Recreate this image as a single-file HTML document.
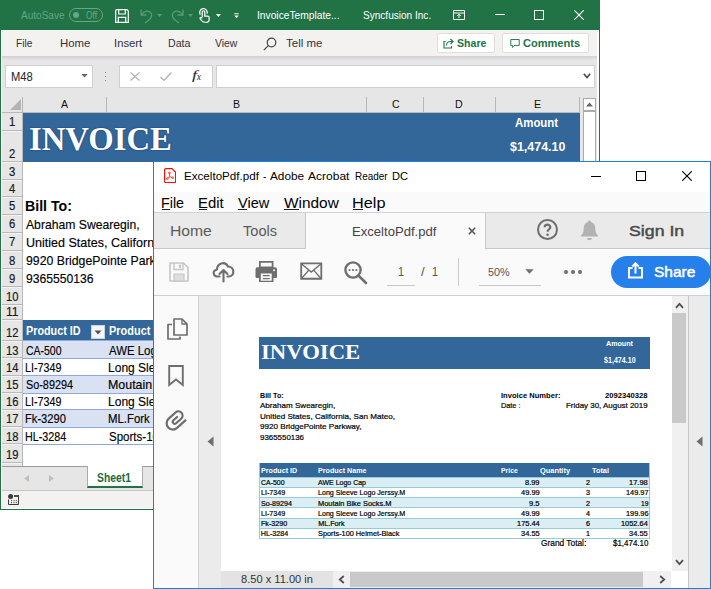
<!DOCTYPE html>
<html lang="en"><head><meta charset="utf-8"><title>Excel to PDF</title>
<style>
html,body{margin:0;padding:0;background:#fff;}
body{width:711px;height:589px;overflow:hidden;position:relative;font-family:"Liberation Sans",sans-serif;}
div,span,svg{position:absolute;box-sizing:border-box;}
.t{white-space:nowrap;line-height:1.2;transform-origin:0 0;}
#xl{left:0;top:0;width:600px;height:510px;background:#e6e6e6;overflow:hidden;}
#ac{left:153px;top:161px;width:558px;height:428px;background:#fff;border:1px solid #1883d7;overflow:hidden;}
#acin{left:-154px;top:-162px;width:711px;height:589px;}
.rh{left:2px;width:20px;height:1px;background:#b9b9b9;box-shadow:0 1px 0 #f3f3f3;}
.band{left:23px;width:557px;background:#d9e1f2;border-top:1px solid #8ea9db;border-bottom:1px solid #8ea9db;}
</style></head><body>

<div id="xl">
  <!-- title bar -->
  <div style="left:0;top:0;width:600px;height:30px;background:#217346;"></div>
  <!-- ribbon tabs -->
  <div style="left:0;top:30px;width:600px;height:26px;background:#f3f2f1;"></div>
  <div style="left:0;top:56px;width:600px;height:4px;background:linear-gradient(#d2d0ce,#e6e6e6);"></div>
  <!-- share / comments buttons -->
  <div style="left:437px;top:33px;width:58px;height:20px;background:#fff;border:1px solid #e1dfdd;border-radius:2px;"></div>
  <div style="left:502px;top:33px;width:87px;height:20px;background:#fff;border:1px solid #e1dfdd;border-radius:2px;"></div>
  <!-- formula bar -->
  <div style="left:5px;top:65px;width:88px;height:23px;background:#fff;border:1px solid #cfcfcf;"></div>
  <div style="left:119px;top:65px;width:94px;height:23px;background:#fff;border:1px solid #cfcfcf;"></div>
  <div style="left:216px;top:65px;width:379px;height:23px;background:#fff;border:1px solid #cfcfcf;"></div>
  <!-- column header -->
  <div style="left:2px;top:112px;width:578px;height:1px;background:#b8b8b8;"></div>
  <div style="left:22px;top:97px;width:1px;height:16px;background:#b8b8b8;"></div>
  <div style="left:106px;top:97px;width:1px;height:16px;background:#b8b8b8;"></div>
  <div style="left:366px;top:97px;width:1px;height:16px;background:#b8b8b8;"></div>
  <div style="left:423px;top:97px;width:1px;height:16px;background:#b8b8b8;"></div>
  <div style="left:495px;top:97px;width:1px;height:16px;background:#b8b8b8;"></div>
  <div style="left:579px;top:97px;width:1px;height:16px;background:#b8b8b8;"></div>
  <svg style="left:9px;top:98px;" width="13" height="13" viewBox="0 0 13 13"><path d="M12 1 V12 H1 Z" fill="#b4b4b4"/></svg>
  <!-- grid -->
  <div style="left:23px;top:113px;width:557px;height:353px;background:#fff;"></div>
  <div style="left:22px;top:113px;width:1px;height:353px;background:#b8b8b8;"></div>
  <div style="left:23px;top:113px;width:557px;height:49px;background:#336699;"></div>
  <!-- table -->
  <div style="left:23px;top:320px;width:557px;height:21px;background:#336699;"></div>
  <div style="left:91px;top:325px;width:14px;height:14px;background:#f4f6fa;border:1px solid #c9d3e3;"></div>
  <svg style="left:94px;top:330px;" width="8" height="5" viewBox="0 0 8 5"><path d="M0.5 0.5 H7.5 L4 4.5 Z" fill="#555"/></svg>
  <div class="band" style="top:340px;height:19px;"></div>
  <div class="band" style="top:375px;height:19px;"></div>
  <div class="band" style="top:409px;height:19px;"></div>
  <div style="left:23px;top:444px;width:557px;height:1px;background:#8ea9db;"></div>
  <!-- row header lines -->
    <div class="rh" style="top:130px;"></div>
  <div class="rh" style="top:161px;"></div>
  <div class="rh" style="top:179px;"></div>
  <div class="rh" style="top:196px;"></div>
  <div class="rh" style="top:214px;"></div>
  <div class="rh" style="top:232px;"></div>
  <div class="rh" style="top:250px;"></div>
  <div class="rh" style="top:268px;"></div>
  <div class="rh" style="top:286px;"></div>
  <div class="rh" style="top:304px;"></div>
  <div class="rh" style="top:319px;"></div>
  <div class="rh" style="top:340px;"></div>
  <div class="rh" style="top:357px;"></div>
  <div class="rh" style="top:375px;"></div>
  <div class="rh" style="top:392px;"></div>
  <div class="rh" style="top:409px;"></div>
  <div class="rh" style="top:426px;"></div>
  <div class="rh" style="top:443px;"></div>
  <div class="rh" style="top:462px;"></div>
  <!-- v scrollbar -->
  <div style="left:583px;top:98px;width:13px;height:13px;background:#fff;border:1px solid #ababab;"></div>
  <svg style="left:586px;top:102px;" width="7" height="5" viewBox="0 0 7 5"><path d="M0 4.5 L3.5 0.5 L7 4.5 Z" fill="#666"/></svg>
  <div style="left:583px;top:111px;width:13px;height:355px;background:#fff;border:1px solid #ababab;"></div>
  <!-- sheet tabs -->
  <div style="left:2px;top:466px;width:596px;height:24px;background:#e6e6e6;border-top:1px solid #9a9a9a;"></div>
  <div style="left:87px;top:466px;width:56px;height:22px;background:#fff;border-left:1px solid #ababab;border-right:1px solid #ababab;border-bottom:2px solid #217346;"></div>
  <svg style="left:23.5px;top:474.5px;" width="5" height="7" viewBox="0 0 5 7"><path d="M5 0 V7 L0.3 3.5 Z" fill="#bdbdbd"/></svg>
  <svg style="left:48.5px;top:474.5px;" width="5" height="7" viewBox="0 0 5 7"><path d="M0 0 V7 L4.7 3.5 Z" fill="#bdbdbd"/></svg>
  <!-- status bar -->
  <div style="left:2px;top:490px;width:596px;height:18px;background:#f3f2f1;border-top:1px solid #c8c6c4;"></div>
  <svg style="left:8px;top:494px;" width="11" height="11" viewBox="0 0 11 11"><circle cx="2.6" cy="2.6" r="2.5" fill="#3b3b3b"/><path d="M6 2 H11" stroke="#3b3b3b" stroke-width="1.8"/><path d="M0.5 5.5 V10.5 H10.5 V3" fill="none" stroke="#3b3b3b"/><path d="M3.5 6 V10 M6 6 V10 M8.3 6 V10" stroke="#3b3b3b" stroke-width=".9" stroke-dasharray="1.2 .8"/></svg>
  <!-- title icons -->
  <div style="left:69px;top:8px;width:34px;height:14px;border:1px solid #66a685;border-radius:7px;"></div>
  <div style="left:73px;top:12px;width:6px;height:6px;border-radius:3px;background:#66a685;"></div>
  <svg style="left:115px;top:9px;" width="14" height="14" viewBox="0 0 14 14" fill="none" stroke="#fff" stroke-width="1.2"><path d="M1.5 0.7 H12 L13.3 2 V13.3 H0.7 V1.5 Z"/><path d="M3.7 0.7 V5 H10.3 V0.7"/><path d="M3.3 13.3 V8.3 H10.7 V13.3"/></svg>
  <svg style="left:140px;top:8px;" width="14" height="16" viewBox="0 0 14 16" fill="none" stroke="#599b78" stroke-width="1.3"><path d="M1 1.5 V7 H6.5"/><path d="M1.5 6.5 C4 2.5 9 2 11 5 C13 8.5 10 12 5 15"/></svg>
  <svg style="left:157px;top:14px;" width="5" height="3" viewBox="0 0 5 3"><path d="M0 0 H5 L2.5 3 Z" fill="#599b78"/></svg>
  <svg style="left:170px;top:8px;" width="14" height="16" viewBox="0 0 14 16" fill="none" stroke="#599b78" stroke-width="1.3"><path d="M13 1.5 V7 H7.5"/><path d="M12.5 6.5 C10 2.5 5 2 3 5 C1 8.5 4 12 9 15"/></svg>
  <svg style="left:187.5px;top:14px;" width="5" height="3" viewBox="0 0 5 3"><path d="M0 0 H5 L2.5 3 Z" fill="#599b78"/></svg>
  <svg style="left:197.5px;top:8.3px;" width="13" height="15.5" viewBox="0 0 14 16" fill="none" stroke="#fff" stroke-width="1.3"><path d="M4.5 9.5 V4 A1.4 1.4 0 0 1 7.3 4 V8.3 H10.3 A1.7 1.7 0 0 1 12 10 V12 A3 3 0 0 1 9 15 H7 C5 15 4 13.5 2.5 11.5 C1.5 10 3 9.2 4.5 10.8"/><path d="M2.6 6.7 A4 4 0 1 1 9.6 5.8"/></svg>
  <svg style="left:215.5px;top:14px;" width="5" height="3" viewBox="0 0 5 3"><path d="M0 0 H5 L2.5 3 Z" fill="#fff"/></svg>
  <svg style="left:233.8px;top:12.6px;" width="5" height="5.5" viewBox="0 0 6 6"><path d="M0.3 0.6 H5.7" stroke="#fff" stroke-width="1.1"/><path d="M0.3 2.6 H5.7 L3 5.8 Z" fill="#fff"/></svg>
  <svg style="left:453px;top:10px;" width="12" height="10" viewBox="0 0 12 10" fill="none" stroke="#fff" stroke-width="1"><path d="M0.5 0.5 H11.5 V9.5 H0.5 Z M0.5 3 H11.5"/><path d="M6 8 V4.5 M4.3 6 L6 4.3 L7.7 6"/></svg>
  <div style="left:495px;top:14px;width:10px;height:1px;background:#fff;"></div>
  <div style="left:534px;top:10px;width:10px;height:10px;border:1px solid #fff;"></div>
  <svg style="left:574px;top:10px;" width="10" height="10" viewBox="0 0 10 10"><path d="M0.3 0.3 L9.7 9.7 M9.7 0.3 L0.3 9.7" stroke="#fff" stroke-width="1.1"/></svg>
  <!-- ribbon icons -->
  <svg style="left:263px;top:37px;" width="14" height="14" viewBox="0 0 14 14" fill="none" stroke="#444" stroke-width="1.2"><circle cx="8.5" cy="5.5" r="4.3"/><path d="M5.3 8.7 L0.8 13.2"/></svg>
  <svg style="left:443px;top:38px;" width="11" height="11" viewBox="0 0 11 11" fill="none" stroke="#217346" stroke-width="1.1"><path d="M2.5 3.5 H1 V10 H8.5 V8"/><path d="M3.5 7.5 C3.5 5 5 3.5 7.5 3.5 H9.5 M7.5 1 L10 3.5 L7.5 6"/></svg>
  <svg style="left:509.5px;top:38.5px;" width="10" height="9.5" viewBox="0 0 11 11" fill="none" stroke="#217346" stroke-width="1.1"><path d="M0.6 0.6 H10.4 V7.4 H4.5 L2.5 9.8 V7.4 H0.6 Z"/></svg>
  <!-- formula bar icons -->
  <svg style="left:80.5px;top:74px;" width="7" height="4" viewBox="0 0 7 4"><path d="M0.3 0 H6.7 L3.5 3.6 Z" fill="#666"/></svg>
  <div style="left:105px;top:72px;width:1px;height:1px;background:#888;box-shadow:0 4px 0 #888,0 8px 0 #888;"></div>
  <svg style="left:130px;top:72px;" width="10" height="9" viewBox="0 0 10 9"><path d="M0.5 0.5 L9.5 8.5 M9.5 0.5 L0.5 8.5" stroke="#b4b4b4" stroke-width="1.2"/></svg>
  <svg style="left:160px;top:72px;" width="12" height="9" viewBox="0 0 12 9"><path d="M0.5 5 L4 8.3 L11.5 0.5" stroke="#b4b4b4" stroke-width="1.3" fill="none"/></svg>
  <svg style="left:583px;top:73px;" width="8" height="6" viewBox="0 0 8 6"><path d="M0.8 0.8 L4 4.5 L7.2 0.8" stroke="#444" stroke-width="1.5" fill="none"/></svg>
<span class="t" style='left:20.60px;top:8.80px;font-size:11.5px;color:#66a685;transform:scaleX(0.8732);'>AutoSave</span>
<span class="t" style='left:85.70px;top:8.80px;font-size:11px;color:#66a685;transform:scaleX(0.7591);'>Off</span>
<span class="t" style='left:256.61px;top:9.20px;font-size:11.5px;color:#fff;transform:scaleX(0.8908);'>InvoiceTemplate...</span>
<span class="t" style='left:363.00px;top:9.20px;font-size:11.5px;color:#fff;transform:scaleX(0.8742);'>Syncfusion Inc.</span>
<span class="t" style='left:15.50px;top:37.20px;font-size:11.5px;color:#333;transform:scaleX(0.8823);'>File</span>
<span class="t" style='left:60.00px;top:37.20px;font-size:11.5px;color:#333;transform:scaleX(0.9907);'>Home</span>
<span class="t" style='left:114.02px;top:37.20px;font-size:11.5px;color:#333;transform:scaleX(0.9802);'>Insert</span>
<span class="t" style='left:167.50px;top:37.20px;font-size:11.5px;color:#333;transform:scaleX(0.9239);'>Data</span>
<span class="t" style='left:215.00px;top:37.20px;font-size:11.5px;color:#333;transform:scaleX(0.9050);'>View</span>
<span class="t" style='left:286.00px;top:37.20px;font-size:11.5px;color:#333;'>Tell me</span>
<span class="t" style='left:457.00px;top:37.20px;font-size:11.5px;color:#217346;font-weight:bold;transform:scaleX(0.9187);'>Share</span>
<span class="t" style='left:523.00px;top:37.20px;font-size:11.5px;color:#217346;font-weight:bold;transform:scaleX(0.9605);'>Comments</span>
<span class="t" style='left:11.00px;top:69.50px;font-size:12px;color:#222;transform:scaleX(0.9294);'>M48</span>
<span class="t" style='left:191.80px;top:68.40px;font-size:12px;color:#222;font-family:"Liberation Serif", serif;font-style:italic;transform:scaleX(1.5200);'>f</span>
<span class="t" style='left:197.33px;top:72.20px;font-size:9.5px;color:#222;font-family:"Liberation Serif", serif;font-style:italic;transform:scaleX(0.9333);'>x</span>
<span class="t" style='left:60.62px;top:98.30px;font-size:11.5px;color:#111;transform:scaleX(0.9200);'>A</span>
<span class="t" style='left:232.82px;top:98.30px;font-size:11.5px;color:#111;transform:scaleX(0.9200);'>B</span>
<span class="t" style='left:391.82px;top:98.30px;font-size:11.5px;color:#111;transform:scaleX(0.9200);'>C</span>
<span class="t" style='left:455.32px;top:98.30px;font-size:11.5px;color:#111;transform:scaleX(0.9200);'>D</span>
<span class="t" style='left:534.32px;top:98.30px;font-size:11.5px;color:#111;transform:scaleX(0.9200);'>E</span>
<span class="t" style='left:8.65px;top:115.00px;font-size:12.5px;color:#1a1a1a;transform:scaleX(0.9000);-webkit-text-stroke:.2px #1a1a1a;'>1</span>
<span class="t" style='left:8.65px;top:147.00px;font-size:12.5px;color:#1a1a1a;transform:scaleX(0.9000);-webkit-text-stroke:.2px #1a1a1a;'>2</span>
<span class="t" style='left:8.65px;top:164.50px;font-size:12.5px;color:#1a1a1a;transform:scaleX(0.9000);-webkit-text-stroke:.2px #1a1a1a;'>3</span>
<span class="t" style='left:8.65px;top:182.00px;font-size:12.5px;color:#1a1a1a;transform:scaleX(0.9000);-webkit-text-stroke:.2px #1a1a1a;'>4</span>
<span class="t" style='left:8.65px;top:199.00px;font-size:12.5px;color:#1a1a1a;transform:scaleX(0.9000);-webkit-text-stroke:.2px #1a1a1a;'>5</span>
<span class="t" style='left:8.65px;top:217.00px;font-size:12.5px;color:#1a1a1a;transform:scaleX(0.9000);-webkit-text-stroke:.2px #1a1a1a;'>6</span>
<span class="t" style='left:8.65px;top:235.00px;font-size:12.5px;color:#1a1a1a;transform:scaleX(0.9000);-webkit-text-stroke:.2px #1a1a1a;'>7</span>
<span class="t" style='left:8.65px;top:253.50px;font-size:12.5px;color:#1a1a1a;transform:scaleX(0.9000);-webkit-text-stroke:.2px #1a1a1a;'>8</span>
<span class="t" style='left:8.65px;top:271.50px;font-size:12.5px;color:#1a1a1a;transform:scaleX(0.9000);-webkit-text-stroke:.2px #1a1a1a;'>9</span>
<span class="t" style='left:5.50px;top:290.00px;font-size:12.5px;color:#1a1a1a;transform:scaleX(0.8959);-webkit-text-stroke:.2px #1a1a1a;'>10</span>
<span class="t" style='left:5.50px;top:305.00px;font-size:12.5px;color:#1a1a1a;transform:scaleX(0.9598);-webkit-text-stroke:.2px #1a1a1a;'>11</span>
<span class="t" style='left:5.50px;top:326.00px;font-size:12.5px;color:#1a1a1a;transform:scaleX(0.8959);-webkit-text-stroke:.2px #1a1a1a;'>12</span>
<span class="t" style='left:5.50px;top:343.50px;font-size:12.5px;color:#1a1a1a;transform:scaleX(0.8959);-webkit-text-stroke:.2px #1a1a1a;'>13</span>
<span class="t" style='left:5.50px;top:361.00px;font-size:12.5px;color:#1a1a1a;transform:scaleX(0.8959);-webkit-text-stroke:.2px #1a1a1a;'>14</span>
<span class="t" style='left:5.50px;top:378.00px;font-size:12.5px;color:#1a1a1a;transform:scaleX(0.8959);-webkit-text-stroke:.2px #1a1a1a;'>15</span>
<span class="t" style='left:5.50px;top:395.00px;font-size:12.5px;color:#1a1a1a;transform:scaleX(0.8959);-webkit-text-stroke:.2px #1a1a1a;'>16</span>
<span class="t" style='left:5.50px;top:412.00px;font-size:12.5px;color:#1a1a1a;transform:scaleX(0.8959);-webkit-text-stroke:.2px #1a1a1a;'>17</span>
<span class="t" style='left:5.50px;top:429.50px;font-size:12.5px;color:#1a1a1a;transform:scaleX(0.8959);-webkit-text-stroke:.2px #1a1a1a;'>18</span>
<span class="t" style='left:5.50px;top:448.00px;font-size:12.5px;color:#1a1a1a;transform:scaleX(0.8959);-webkit-text-stroke:.2px #1a1a1a;'>19</span>
<span class="t" style='left:28.54px;top:118.50px;font-size:34px;color:#fff;font-weight:bold;font-family:"Liberation Serif", serif;transform:scaleX(0.9617);text-shadow:0 0 1.5px #0a2a55;'>INVOICE</span>
<span class="t" style='left:515.00px;top:116.00px;font-size:12.3px;color:#fff;font-weight:bold;transform:scaleX(0.9278);'>Amount</span>
<span class="t" style='left:510.00px;top:138.75px;font-size:13.3px;color:#fff;font-weight:bold;transform:scaleX(0.9360);'>$1,474.10</span>
<span class="t" style='left:25.09px;top:196.50px;font-size:15.5px;color:#000;font-weight:bold;transform:scaleX(0.9145);'>Bill To:</span>
<span class="t" style='left:25.50px;top:217.75px;font-size:12.6px;color:#000;transform:scaleX(0.9671);-webkit-text-stroke:.15px #000;'>Abraham Swearegin,</span>
<span class="t" style='left:25.50px;top:235.75px;font-size:12.6px;color:#000;transform:scaleX(0.9950);-webkit-text-stroke:.15px #000;'>Unitied States, California, San Mateo,</span>
<span class="t" style='left:25.50px;top:254.00px;font-size:12.6px;color:#000;transform:scaleX(0.9750);-webkit-text-stroke:.15px #000;'>9920 BridgePointe Parkway,</span>
<span class="t" style='left:25.50px;top:271.50px;font-size:12.6px;color:#000;transform:scaleX(0.9638);-webkit-text-stroke:.15px #000;'>9365550136</span>
<span class="t" style='left:25.50px;top:324.00px;font-size:12.6px;color:#fff;font-weight:bold;transform:scaleX(0.8573);'>Product ID</span>
<span class="t" style='left:108.80px;top:324.00px;font-size:12.6px;color:#fff;font-weight:bold;transform:scaleX(0.8700);'>Product Name</span>
<span class="t" style='left:25.50px;top:343.50px;font-size:12.6px;color:#000;transform:scaleX(0.8314);-webkit-text-stroke:.15px #000;'>CA-500</span>
<span class="t" style='left:109.00px;top:343.50px;font-size:12.6px;color:#000;transform:scaleX(0.9050);-webkit-text-stroke:.15px #000;'>AWE Logo Cap</span>
<span class="t" style='left:24.65px;top:361.00px;font-size:12.6px;color:#000;transform:scaleX(0.8511);-webkit-text-stroke:.15px #000;'>LI-7349</span>
<span class="t" style='left:108.05px;top:361.00px;font-size:12.6px;color:#000;transform:scaleX(0.9550);-webkit-text-stroke:.15px #000;'>Long Sleeve Logo Jerssy.M</span>
<span class="t" style='left:25.50px;top:378.00px;font-size:12.6px;color:#000;transform:scaleX(0.8606);-webkit-text-stroke:.15px #000;'>So-89294</span>
<span class="t" style='left:108.02px;top:378.00px;font-size:12.6px;color:#000;transform:scaleX(0.9850);-webkit-text-stroke:.15px #000;'>Moutain Bike Socks.M</span>
<span class="t" style='left:24.65px;top:395.00px;font-size:12.6px;color:#000;transform:scaleX(0.8511);-webkit-text-stroke:.15px #000;'>LI-7349</span>
<span class="t" style='left:108.05px;top:395.00px;font-size:12.6px;color:#000;transform:scaleX(0.9550);-webkit-text-stroke:.15px #000;'>Long Sleeve Logo Jerssy.M</span>
<span class="t" style='left:24.61px;top:412.00px;font-size:12.6px;color:#000;transform:scaleX(0.8850);-webkit-text-stroke:.15px #000;'>Fk-3290</span>
<span class="t" style='left:108.10px;top:412.00px;font-size:12.6px;color:#000;transform:scaleX(0.9044);-webkit-text-stroke:.15px #000;'>ML.Fork</span>
<span class="t" style='left:24.64px;top:429.50px;font-size:12.6px;color:#000;transform:scaleX(0.8562);-webkit-text-stroke:.15px #000;'>HL-3284</span>
<span class="t" style='left:109.00px;top:429.50px;font-size:12.6px;color:#000;transform:scaleX(0.9150);-webkit-text-stroke:.15px #000;'>Sports-100 Helmet-Black</span>
<span class="t" style='left:96.75px;top:470.60px;font-size:12px;color:#1b6b40;font-weight:bold;transform:scaleX(0.8632);'>Sheet1</span>
  <!-- window border -->
  <div style="left:0;top:30px;width:2px;height:480px;background:#fff;border-left:1px solid #217346;"></div>
  <div style="left:597px;top:30px;width:3px;height:480px;background:#fff;border-right:1px solid #217346;"></div>
  <div style="left:0;top:508px;width:600px;height:2px;background:#fff;border-bottom:1px solid #217346;border-left:1px solid #217346;border-right:1px solid #217346;"></div>
</div>

<div id="ac"><div id="acin">
  <!-- menu bar -->
  <div style="left:154px;top:192px;width:556px;height:21px;background:#fafafa;border-bottom:1px solid #d2d2d2;"></div>
  <!-- tab bar -->
  <div style="left:154px;top:213px;width:556px;height:36px;background:#fafafa;"></div>
  <div style="left:154px;top:213px;width:152px;height:36px;background:#eaeaea;border-right:1px solid #c8c8c8;border-bottom:1px solid #c8c8c8;"></div>
  <div style="left:485px;top:213px;width:225px;height:36px;background:#eaeaea;border-left:1px solid #c8c8c8;border-bottom:1px solid #c8c8c8;"></div>
  <!-- toolbar -->
  <div style="left:154px;top:249px;width:556px;height:47px;background:#fafafa;border-bottom:1px solid #cfcfcf;"></div>
  <!-- panes -->
  <div style="left:154px;top:296px;width:45px;height:292px;background:#fafafa;border-right:1px solid #d0d0d0;"></div>
  <div style="left:199px;top:296px;width:22px;height:292px;background:#ebebeb;"></div>
  <div style="left:688px;top:296px;width:22px;height:292px;background:#ebebeb;border-left:1px solid #c6c6c6;"></div>
  <!-- scrollbars -->
  <div style="left:672px;top:296px;width:16px;height:275px;background:#f0f0f0;"></div>
  <div style="left:672.3px;top:313px;width:14.2px;height:110px;background:#c9c9c9;"></div>
  <div style="left:221px;top:571px;width:450px;height:17px;background:#f0f0f0;"></div>
  <div style="left:221px;top:571px;width:112px;height:17px;background:#e3e3e3;"></div>
  <div style="left:350px;top:572px;width:293px;height:15px;background:#c9c9c9;"></div>
  <svg style="left:675px;top:302px;" width="9" height="7" viewBox="0 0 9 7"><path d="M1 5.8 L4.5 1.8 L8 5.8" fill="none" stroke="#505050" stroke-width="1.8"/></svg>
  <svg style="left:675px;top:559px;" width="9" height="7" viewBox="0 0 9 7"><path d="M1 1.2 L4.5 5.2 L8 1.2" fill="none" stroke="#505050" stroke-width="1.8"/></svg>
  <svg style="left:338px;top:575px;" width="7" height="9" viewBox="0 0 7 9"><path d="M5.8 1 L1.8 4.5 L5.8 8" fill="none" stroke="#505050" stroke-width="1.8"/></svg>
  <svg style="left:659px;top:575px;" width="7" height="9" viewBox="0 0 7 9"><path d="M1.2 1 L5.2 4.5 L1.2 8" fill="none" stroke="#505050" stroke-width="1.8"/></svg>
  <svg style="left:207px;top:436px;" width="7" height="11" viewBox="0 0 7 11"><path d="M6.5 0.5 V10.5 L0.5 5.5 Z" fill="#6e6e6e"/></svg>
  <svg style="left:696px;top:436px;" width="7" height="11" viewBox="0 0 7 11"><path d="M6.5 0.5 V10.5 L0.5 5.5 Z" fill="#6e6e6e"/></svg>
  <!-- title bar icons -->
  <svg style="left:164px;top:167.8px;" width="12.2" height="15.3" viewBox="0 0 12.2 15.3" fill="none" stroke="#f40f02"><path d="M2 0.6 H8 L11.6 4.2 V13.4 A1.3 1.3 0 0 1 10.3 14.7 H2 A1.3 1.3 0 0 1 0.6 13.4 V2 A1.3 1.3 0 0 1 2 0.6 Z" stroke-width="1.2"/><g stroke-width=".800"><circle cx="5.5" cy="4.9" r="0.9"/><circle cx="3.3" cy="10.6" r="0.9"/><circle cx="8.7" cy="9.8" r="0.9"/><path d="M5.5 5.8 L5.7 8.7 L4 10 M5.7 8.7 L7.9 9.5"/></g></svg>
  <div style="left:591px;top:176px;width:10px;height:1px;background:#000;"></div>
  <div style="left:636px;top:171px;width:10px;height:10px;border:1px solid #000;"></div>
  <svg style="left:682px;top:171px;" width="10" height="10" viewBox="0 0 10 10"><path d="M0.3 0.3 L9.7 9.7 M9.7 0.3 L0.3 9.7" stroke="#000" stroke-width="1.1"/></svg>
  <!-- menu underlines -->
  <div style="left:162px;top:209px;width:8px;height:1px;background:#222;"></div>
  <div style="left:199px;top:209px;width:8px;height:1px;background:#222;"></div>
  <div style="left:238px;top:209px;width:9px;height:1px;background:#222;"></div>
  <div style="left:284px;top:209px;width:15px;height:1px;background:#222;"></div>
  <div style="left:353px;top:209px;width:10px;height:1px;background:#222;"></div>
  <!-- tab bar icons -->
  <svg style="left:468px;top:227px;" width="8" height="8" viewBox="0 0 8 8"><path d="M0.8 0.8 L7.2 7.2 M7.2 0.8 L0.8 7.2" stroke="#555" stroke-width="1.6"/></svg>
  <svg style="left:536px;top:218px;" width="23" height="23" viewBox="0 0 23 23"><circle cx="11.5" cy="11.5" r="9.5" fill="none" stroke="#6e6e6e" stroke-width="2"/><path d="M8.7 9.3 C8.7 5.8 14.3 5.8 14.3 9.2 C14.3 11.3 11.6 11.3 11.6 13.8" fill="none" stroke="#6e6e6e" stroke-width="2.2"/><circle cx="11.6" cy="16.7" r="1.3" fill="#6e6e6e"/></svg>
  <svg style="left:580px;top:220px;" width="19" height="21" viewBox="0 0 19 21"><path d="M9.5 0.5 C10.6 0.5 11 1.2 11 2 C14 2.8 15.3 5.3 15.3 8.5 C15.3 12.5 16.3 14 18 15.5 V16.5 H1 V15.5 C2.7 14 3.7 12.5 3.7 8.5 C3.7 5.3 5 2.8 8 2 C8 1.2 8.4 0.5 9.5 0.5 Z M7.3 18 H11.7 C11.7 19.3 10.8 20.3 9.5 20.3 C8.2 20.3 7.3 19.3 7.3 18 Z" fill="#b2b2b2"/></svg>
  <!-- toolbar icons -->
  <svg style="left:169px;top:262px;" width="20" height="20" viewBox="0 0 20 20"><path d="M1 1 H14.5 L19 5.5 V19 H1 Z" fill="none" stroke="#c6c6c6" stroke-width="1.6"/><path d="M5 1 V7.5 H14 V1" fill="none" stroke="#c6c6c6" stroke-width="1.4"/><path d="M10 2.5 H12 V6 H10 Z" fill="#c6c6c6"/><path d="M5 12 H15 V19 H5 Z" fill="#dedede" stroke="#c6c6c6" stroke-width="1.2"/></svg>
  <svg style="left:212px;top:260.3px;" width="23" height="23" viewBox="0 0 23 23" fill="none" stroke="#6e6e6e" stroke-width="2.1" stroke-linecap="round" stroke-linejoin="round"><path d="M7.5 16.5 H5.5 C1 16.5 0 10.5 5 9.5 C5 3.5 13 0.5 16 6.5 C22.5 6.5 23.5 16.5 16.5 16.5 H15.5"/><path d="M11.5 21.5 V10.5 M7.5 14 L11.5 10 L15.5 14"/></svg>
  <svg style="left:255px;top:260.6px;" width="22.5" height="21.5" viewBox="0 0 23 22"><path d="M5 1 H18 V6.5 H5 Z" fill="none" stroke="#6e6e6e" stroke-width="1.8"/><path d="M2.5 6.5 H20.5 A2 2 0 0 1 22.5 8.5 V16 A1.5 1.5 0 0 1 21 17.5 H2 A1.5 1.5 0 0 1 0.5 16 V8.5 A2 2 0 0 1 2.5 6.5 Z" fill="#6e6e6e"/><path d="M5 12 H18 V21 H5 Z" fill="#fafafa" stroke="#6e6e6e" stroke-width="1.8"/><path d="M8 15 H15 M8 18 H15" stroke="#6e6e6e" stroke-width="1.3"/><circle cx="19.5" cy="9.5" r="1" fill="#fafafa"/></svg>
  <svg style="left:300px;top:262.3px;" width="22.500" height="18.200" viewBox="0 0 23 19" fill="none" stroke="#6e6e6e"><path d="M1 1.5 H22 V17.5 H1 Z" stroke-width="1.9"/><path d="M1.5 2 L11.5 10.5 L21.5 2 M1.5 17 L9 8.5 M21.5 17 L14 8.5" stroke-width="1.4"/></svg>
  <svg style="left:343px;top:260px;" width="25" height="25" viewBox="0 0 25 25" fill="none" stroke="#6e6e6e"><circle cx="10" cy="10" r="7.6" stroke-width="2.4"/><path d="M15.8 15.8 L23 23" stroke-width="2.6" stroke-linecap="round"/><g fill="#6e6e6e" stroke="none"><circle cx="6.5" cy="10" r="1.1"/><circle cx="10" cy="10" r="1.1"/><circle cx="13.5" cy="10" r="1.1"/></g></svg>
  <div style="left:387px;top:285px;width:28px;height:1px;background:#cacaca;"></div>
  <div style="left:458px;top:258px;width:1px;height:28px;background:#cacaca;"></div>
  <div style="left:479px;top:285px;width:62px;height:1px;background:#cacaca;"></div>
  <svg style="left:525px;top:269px;" width="9" height="5" viewBox="0 0 9 5"><path d="M0.3 0.3 H8.7 L4.5 4.8 Z" fill="#6e6e6e"/></svg>
  <div style="left:564px;top:269.5px;width:4px;height:4px;border-radius:2px;background:#6e6e6e;box-shadow:7px 0 0 #6e6e6e,14px 0 0 #6e6e6e;"></div>
  <div style="left:611px;top:256px;width:99.5px;height:32px;border-radius:16px;background:#2680eb;"></div>
  <svg style="left:627px;top:262px;" width="17" height="17" viewBox="0 0 16 17" fill="none" stroke="#fff" stroke-width="2"><path d="M5 6 H1.5 V15.5 H14.5 V6 H11"/><path d="M8 11.5 V1.5 M4.8 4.5 L8 1.3 L11.2 4.5"/></svg>
  <!-- left pane icons -->
  <svg style="left:167px;top:318px;" width="21" height="22" viewBox="0 0 21 22" fill="none" stroke="#6e6e6e" stroke-width="1.7" stroke-linejoin="round"><path d="M7 1 H15 L20 6 V17 H7 Z"/><path d="M15 1 V6 H20" stroke-width="1.3"/><path d="M5 6.5 H1 V21 H13 V18.5"/></svg>
  <svg style="left:168px;top:365px;" width="16" height="22" viewBox="0 0 16 22" fill="none" stroke="#6e6e6e" stroke-width="1.9"><path d="M1.2 1 H14.8 V20 L8 14.5 L1.2 20 Z"/></svg>
  <svg style="left:160px;top:405px;" width="35" height="32" viewBox="0 0 35 32" fill="none" stroke="#6e6e6e" stroke-width="2.2" stroke-linecap="round"><path transform="translate(10.2 12.3) rotate(-42)" d="M9.2 12.5 L-2 12.5 A6.25 6.25 0 0 1 -2 0 L7.2 0 A4.2 4.2 0 0 1 7.2 8.4 L0.4 8.4 A2 2 0 0 1 0.4 4.4 L5.4 4.4"/></svg>
  <!-- PDF page -->
  <div style="left:259px;top:337px;width:391px;height:32px;background:#336699;"></div>
  <div style="left:259px;top:463px;width:391px;height:14px;background:#336699;"></div>
  <div style="left:259px;top:477px;width:391px;height:11px;background:#daeef3;border-top:1px solid #92cddc;border-bottom:1px solid #92cddc;"></div>
  <div style="left:259px;top:497px;width:391px;height:11px;background:#daeef3;border-top:1px solid #92cddc;border-bottom:1px solid #92cddc;"></div>
  <div style="left:259px;top:518px;width:391px;height:11px;background:#daeef3;border-top:1px solid #92cddc;border-bottom:1px solid #92cddc;"></div>
  <div style="left:259px;top:538px;width:391px;height:1px;background:#92cddc;"></div>
  <div style="left:259px;top:463px;width:1px;height:76px;background:#92cddc;"></div>
  <div style="left:649px;top:463px;width:1px;height:76px;background:#92cddc;"></div>
<span class="t" style='left:183.50px;top:170.00px;font-size:11.5px;color:#000;transform:scaleX(1.0105);'>ExceltoPdf.pdf</span>
<span class="t" style='left:263.00px;top:170.00px;font-size:11.5px;color:#000;transform:scaleX(0.9000);'>-</span>
<span class="t" style='left:270.30px;top:170.00px;font-size:11.5px;color:#000;transform:scaleX(1.0256);'>Adobe</span>
<span class="t" style='left:308.30px;top:170.00px;font-size:11.5px;color:#000;transform:scaleX(1.0461);'>Acrobat</span>
<span class="t" style='left:355.10px;top:170.00px;font-size:11.5px;color:#000;transform:scaleX(0.8631);'>Reader</span>
<span class="t" style='left:392.30px;top:170.00px;font-size:11.5px;color:#000;transform:scaleX(0.9629);'>DC</span>
<span class="t" style='left:161.05px;top:193.50px;font-size:15px;color:#000;transform:scaleX(0.9550);'>File</span>
<span class="t" style='left:197.81px;top:193.50px;font-size:15px;color:#000;transform:scaleX(0.9930);'>Edit</span>
<span class="t" style='left:238.00px;top:193.50px;font-size:15px;color:#000;transform:scaleX(0.9720);'>View</span>
<span class="t" style='left:284.25px;top:193.50px;font-size:15px;color:#000;transform:scaleX(1.0277);'>Window</span>
<span class="t" style='left:351.92px;top:193.50px;font-size:15px;color:#000;transform:scaleX(1.0845);'>Help</span>
<span class="t" style='left:170.22px;top:222.50px;font-size:14.5px;color:#5a5a5a;transform:scaleX(1.0820);'>Home</span>
<span class="t" style='left:242.50px;top:222.50px;font-size:14.5px;color:#5a5a5a;transform:scaleX(1.0045);'>Tools</span>
<span class="t" style='left:352.49px;top:223.50px;font-size:13px;color:#444;transform:scaleX(1.0064);'>ExceltoPdf.pdf</span>
<span class="t" style='left:629.40px;top:221.70px;font-size:15px;color:#4b4b4b;transform:scaleX(1.1821);-webkit-text-stroke:.45px #4b4b4b;'>Sign In</span>
<span class="t" style='left:397.85px;top:264.75px;font-size:12px;color:#555;transform:scaleX(0.9000);'>1</span>
<span class="t" style='left:421.00px;top:264.75px;font-size:12px;color:#555;transform:scaleX(1.1000);'>/</span>
<span class="t" style='left:431.85px;top:264.75px;font-size:12px;color:#555;transform:scaleX(0.9000);'>1</span>
<span class="t" style='left:487.50px;top:265.70px;font-size:11.5px;color:#555;transform:scaleX(0.9433);'>50%</span>
<span class="t" style='left:654.00px;top:262.90px;font-size:15px;color:#fff;transform:scaleX(1.0306);-webkit-text-stroke:.5px #fff;'>Share</span>
<span class="t" style='left:241.40px;top:572.30px;font-size:11.8px;color:#333;transform:scaleX(0.9400);'>8.50 x 11.00 in</span>
<span class="t" style='left:260.50px;top:340.25px;font-size:21.6px;color:#fff;font-weight:bold;font-family:"Liberation Serif", serif;transform:scaleX(1.0510);'>INVOICE</span>
<span class="t" style='left:605.75px;top:339.75px;font-size:7.2px;color:#fff;font-weight:bold;transform:scaleX(0.9909);'>Amount</span>
<span class="t" style='left:604.25px;top:353.50px;font-size:9.4px;color:#fff;font-weight:bold;transform:scaleX(0.7592);'>$1,474.10</span>
<span class="t" style='left:260.00px;top:390.50px;font-size:8.1px;color:#000;font-weight:bold;transform:scaleX(0.8803);'>Bill To:</span>
<span class="t" style='left:260.00px;top:400.50px;font-size:8.1px;color:#000;transform:scaleX(0.9956);-webkit-text-stroke:.2px #000;'>Abraham Swearegin,</span>
<span class="t" style='left:260.00px;top:411.75px;font-size:8.1px;color:#000;-webkit-text-stroke:.2px #000;'>Unitied States, California, San Mateo,</span>
<span class="t" style='left:260.00px;top:422.00px;font-size:8.1px;color:#000;-webkit-text-stroke:.2px #000;'>9920 BridgePointe Parkway,</span>
<span class="t" style='left:260.00px;top:433.00px;font-size:8.1px;color:#000;transform:scaleX(0.9778);-webkit-text-stroke:.2px #000;'>9365550136</span>
<span class="t" style='left:500.75px;top:391.00px;font-size:8.1px;color:#000;font-weight:bold;transform:scaleX(0.9367);'>Invoice Number:</span>
<span class="t" style='left:500.75px;top:401.00px;font-size:8.1px;color:#000;transform:scaleX(0.9018);-webkit-text-stroke:.2px #000;'>Date :</span>
<span class="t" style='left:605.00px;top:391.00px;font-size:8.1px;color:#000;font-weight:bold;transform:scaleX(0.9448);'>2092340328</span>
<span class="t" style='left:565.50px;top:401.00px;font-size:8.1px;color:#000;transform:scaleX(0.9800);-webkit-text-stroke:.2px #000;'>Friday 30, August 2019</span>
<span class="t" style='left:260.75px;top:467.25px;font-size:7.2px;color:#fff;font-weight:bold;transform:scaleX(0.9959);'>Product ID</span>
<span class="t" style='left:318.25px;top:467.25px;font-size:7.2px;color:#fff;font-weight:bold;transform:scaleX(0.9953);'>Product Name</span>
<span class="t" style='left:500.75px;top:467.25px;font-size:7.2px;color:#fff;font-weight:bold;transform:scaleX(0.9525);'>Price</span>
<span class="t" style='left:540.00px;top:467.25px;font-size:7.2px;color:#fff;font-weight:bold;transform:scaleX(1.0291);'>Quantity</span>
<span class="t" style='left:591.75px;top:467.25px;font-size:7.2px;color:#fff;font-weight:bold;transform:scaleX(1.0218);'>Total</span>
<span class="t" style='left:260.75px;top:479.00px;font-size:7.2px;color:#000;transform:scaleX(0.9642);-webkit-text-stroke:.2px #000;'>CA-500</span>
<span class="t" style='left:318.25px;top:479.00px;font-size:7.2px;color:#000;transform:scaleX(0.9741);-webkit-text-stroke:.2px #000;'>AWE Logo Cap</span>
<span class="t" style='left:525.00px;top:479.00px;font-size:7.2px;color:#000;transform:scaleX(1.0363);-webkit-text-stroke:.2px #000;'>8.99</span>
<span class="t" style='left:586.00px;top:479.00px;font-size:7.2px;color:#000;-webkit-text-stroke:.2px #000;'>2</span>
<span class="t" style='left:629.25px;top:479.00px;font-size:7.2px;color:#000;transform:scaleX(1.0423);-webkit-text-stroke:.2px #000;'>17.98</span>
<span class="t" style='left:260.75px;top:489.00px;font-size:7.2px;color:#000;transform:scaleX(0.9947);-webkit-text-stroke:.2px #000;'>LI-7349</span>
<span class="t" style='left:318.25px;top:489.00px;font-size:7.2px;color:#000;transform:scaleX(0.9895);-webkit-text-stroke:.2px #000;'>Long Sleeve Logo Jerssy.M</span>
<span class="t" style='left:520.75px;top:489.00px;font-size:7.2px;color:#000;transform:scaleX(1.0423);-webkit-text-stroke:.2px #000;'>49.99</span>
<span class="t" style='left:586.00px;top:489.00px;font-size:7.2px;color:#000;-webkit-text-stroke:.2px #000;'>3</span>
<span class="t" style='left:625.50px;top:489.00px;font-size:7.2px;color:#000;transform:scaleX(1.0234);-webkit-text-stroke:.2px #000;'>149.97</span>
<span class="t" style='left:260.75px;top:499.50px;font-size:7.2px;color:#000;transform:scaleX(0.9944);-webkit-text-stroke:.2px #000;'>So-89294</span>
<span class="t" style='left:318.25px;top:499.50px;font-size:7.2px;color:#000;transform:scaleX(1.0335);-webkit-text-stroke:.2px #000;'>Moutain Bike Socks.M</span>
<span class="t" style='left:529.00px;top:499.50px;font-size:7.2px;color:#000;transform:scaleX(1.0506);-webkit-text-stroke:.2px #000;'>9.5</span>
<span class="t" style='left:586.00px;top:499.50px;font-size:7.2px;color:#000;-webkit-text-stroke:.2px #000;'>2</span>
<span class="t" style='left:640.50px;top:499.50px;font-size:7.2px;color:#000;transform:scaleX(0.9378);-webkit-text-stroke:.2px #000;'>19</span>
<span class="t" style='left:260.75px;top:509.75px;font-size:7.2px;color:#000;transform:scaleX(0.9947);-webkit-text-stroke:.2px #000;'>LI-7349</span>
<span class="t" style='left:318.25px;top:509.75px;font-size:7.2px;color:#000;transform:scaleX(0.9895);-webkit-text-stroke:.2px #000;'>Long Sleeve Logo Jerssy.M</span>
<span class="t" style='left:520.75px;top:509.75px;font-size:7.2px;color:#000;transform:scaleX(1.0423);-webkit-text-stroke:.2px #000;'>49.99</span>
<span class="t" style='left:586.00px;top:509.75px;font-size:7.2px;color:#000;-webkit-text-stroke:.2px #000;'>4</span>
<span class="t" style='left:625.50px;top:509.75px;font-size:7.2px;color:#000;transform:scaleX(1.0234);-webkit-text-stroke:.2px #000;'>199.96</span>
<span class="t" style='left:260.75px;top:519.75px;font-size:7.2px;color:#000;transform:scaleX(0.9955);-webkit-text-stroke:.2px #000;'>Fk-3290</span>
<span class="t" style='left:318.25px;top:519.75px;font-size:7.2px;color:#000;-webkit-text-stroke:.2px #000;'>ML.Fork</span>
<span class="t" style='left:516.75px;top:519.75px;font-size:7.2px;color:#000;transform:scaleX(1.0347);-webkit-text-stroke:.2px #000;'>175.44</span>
<span class="t" style='left:586.00px;top:519.75px;font-size:7.2px;color:#000;-webkit-text-stroke:.2px #000;'>6</span>
<span class="t" style='left:621.25px;top:519.75px;font-size:7.2px;color:#000;transform:scaleX(1.0295);-webkit-text-stroke:.2px #000;'>1052.64</span>
<span class="t" style='left:260.75px;top:529.75px;font-size:7.2px;color:#000;-webkit-text-stroke:.2px #000;'>HL-3284</span>
<span class="t" style='left:318.25px;top:529.75px;font-size:7.2px;color:#000;transform:scaleX(1.0181);-webkit-text-stroke:.2px #000;'>Sports-100 Helmet-Black</span>
<span class="t" style='left:520.75px;top:529.75px;font-size:7.2px;color:#000;transform:scaleX(1.0423);-webkit-text-stroke:.2px #000;'>34.55</span>
<span class="t" style='left:586.00px;top:529.75px;font-size:7.2px;color:#000;-webkit-text-stroke:.2px #000;'>1</span>
<span class="t" style='left:629.25px;top:529.75px;font-size:7.2px;color:#000;transform:scaleX(1.0423);-webkit-text-stroke:.2px #000;'>34.55</span>
<span class="t" style='left:540.50px;top:538.25px;font-size:8.8px;color:#000;transform:scaleX(0.9479);-webkit-text-stroke:.2px #000;'>Grand Total:</span>
<span class="t" style='left:612.50px;top:538.25px;font-size:8.8px;color:#000;transform:scaleX(0.9046);-webkit-text-stroke:.2px #000;'>$1,474.10</span>
</div></div>
</body></html>
